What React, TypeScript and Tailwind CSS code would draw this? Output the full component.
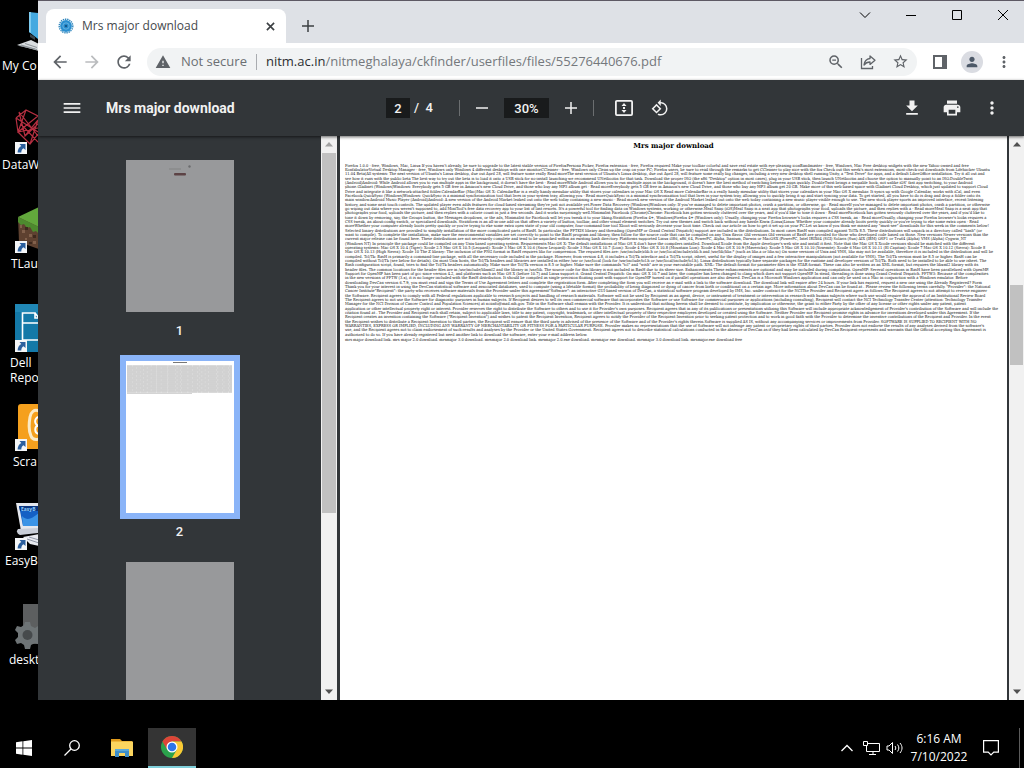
import React from "react";

const UI = "font-['Open_Sans','Noto_Sans',sans-serif]";

function Icon({ d, className }: { d: string; className: string }) {
  return (
    <svg viewBox="0 0 24 24" fill="currentColor" className={className} aria-hidden="true">
      <path d={d} />
    </svg>
  );
}

const BACK = "M20 11H7.83l5.59-5.59L12 4l-8 8 8 8 1.41-1.41L7.83 13H20v-2z";
const FORWARD = "M12 4l-1.41 1.41L16.17 11H4v2h12.17l-5.58 5.59L12 20l8-8z";
const RELOAD =
  "M17.65 6.35A7.958 7.958 0 0012 4c-4.42 0-7.99 3.58-7.99 8s3.57 8 7.99 8c3.73 0 6.84-2.55 7.73-6h-2.08A5.99 5.99 0 0112 18c-3.31 0-6-2.69-6-6s2.69-6 6-6c1.66 0 3.14.69 4.22 1.78L13 11h7V4l-2.35 2.35z";
const WARNING = "M1 21h22L12 2 1 21zm12-3h-2v-2h2v2zm0-4h-2v-4h2v4z";
const ZOOM_OUT =
  "M15.5 14h-.79l-.28-.27A6.471 6.471 0 0016 9.5 6.5 6.5 0 109.5 16c1.61 0 3.09-.59 4.23-1.57l.27.28v.79l5 4.99L20.49 19l-4.99-5zm-6 0C7.01 14 5 11.99 5 9.5S7.01 5 9.5 5 14 7.01 14 9.5 11.99 14 9.5 14zM7 8.8h5v1.5H7z";
const STAR =
  "M22 9.24l-7.19-.62L12 2 9.19 8.63 2 9.24l5.46 4.73L5.82 21 12 17.27 18.18 21l-1.63-7.03L22 9.24zM12 15.4l-3.76 2.27 1-4.28-3.32-2.88 4.38-.38L12 6.1l1.71 4.04 4.38.38-3.32 2.88 1 4.28L12 15.4z";
const PERSON =
  "M12 12c2.21 0 4-1.79 4-4s-1.79-4-4-4-4 1.79-4 4 1.79 4 4 4zm0 2c-2.67 0-8 1.34-8 4v2h16v-2c0-2.66-5.33-4-8-4z";
const DOTS =
  "M12 8c1.1 0 2-.9 2-2s-.9-2-2-2-2 .9-2 2 .9 2 2 2zm0 2c-1.1 0-2 .9-2 2s.9 2 2 2 2-.9 2-2-.9-2-2-2zm0 6c-1.1 0-2 .9-2 2s.9 2 2 2 2-.9 2-2-.9-2-2-2z";
const MENU = "M2 18h20v-2H2v2zm0-5h20v-2H2v2zm0-7v2h20V6H2z";
const MINUS = "M4 11h16v2H4z";
const PLUS = "M20 13h-7v7h-2v-7H4v-2h7V4h2v7h7v2z";
const ROTATE =
  "M7.34 6.41L.86 12.9l6.49 6.48 6.49-6.48-6.5-6.49zM3.69 12.9l3.66-3.66L11 12.9l-3.66 3.66-3.65-3.66zm15.67-6.26A8.95 8.95 0 0013 4V.76L8.76 5 13 9.24V6c1.79 0 3.58.68 4.95 2.05a7.007 7.007 0 010 9.9 6.973 6.973 0 01-7.79 1.44l-1.49 1.49C10.02 21.62 11.51 22 13 22c2.3 0 4.61-.88 6.36-2.64a8.98 8.98 0 000-12.72z";
const DOWNLOAD = "M19 9h-4V3H9v6H5l7 7 7-7zM5 18v2h14v-2H5z";
const PRINT =
  "M19 8H5c-1.66 0-3 1.34-3 3v6h4v4h12v-4h4v-6c0-1.66-1.34-3-3-3zm-3 11H8v-5h8v5zm3-7c-.55 0-1-.45-1-1s.45-1 1-1 1 .45 1 1-.45 1-1 1zm-1-9H6v4h12V3z";

function Shortcut() {
  return (
    <g>
      <rect x="0" y="36" width="12" height="12" fill="#f4f6f8" />
      <path d="M4.500 38h6v6l-2-1.800c-1.600 1-2.200 2.300-2.200 4.400H2.600c0-3.200 1.500-5.400 3.700-6.600z" fill="#2b5f9e" />
    </g>
  );
}

const desktopIcons: { label: string[]; pad: string; art: React.ReactNode }[] = [
  {
    label: ["My Co"],
    pad: "pl-[2px]",
    art: (
      <g>
        <path d="M14 5l9 1v26l-9-7z" fill="#45a9e0" />
        <path d="M14 5l2 0v21l-2-1z" fill="#7ecbf0" />
        <path d="M2 38l14-5 8 4v7z" fill="#d9dde0" />
        <path d="M6 38l14 4M10 36.5l12 4M4 38.5l18 4" stroke="#8d9499" strokeWidth="1" fill="none" />
        <path d="M15 27l5 3v3l-5-3z" fill="#3a4248" />
      </g>
    ),
  },
  {
    label: ["DataW"],
    pad: "pl-[2px]",
    art: (
      <g>
        <path
          d="M1 12l10-8 12 6M1 12l22 14M4 6l6 24 13-16M11 4L3 26l20-4M1 12l2 14 12 12 8-10M3 26l20-16M4 6l19 24M10 30l13-12M6 18l17 18M15 38l8-24M3 26l12 12"
          stroke="#b52f41"
          strokeWidth="1.2"
          fill="none"
        />
        <Shortcut />
      </g>
    ),
  },
  {
    label: ["TLau"],
    pad: "pl-[11px]",
    art: (
      <g>
        <path d="M3 12L24 2v24z" fill="#62a83c" />
        <path d="M3 12l21 10v22L4 37z" fill="#5e4130" />
        <path d="M3 12l21 10v7l-3-3-3 1-3-5-3 1-3-4-3 1-3-3z" fill="#4d8a2e" />
        <path d="M7 25h3v3H7zM14 29h3v3h-3zM18 36h3v3h-3zM10 33h2v2h-2zM5 20h2v3H5z" fill="#81604b" />
        <path d="M10 22h3v3h-3zM18 30h3v3h-3zM14 37h3v2h-3z" fill="#3e291e" />
        <Shortcut />
      </g>
    ),
  },
  {
    label: ["Dell", "Repo"],
    pad: "pl-[10px]",
    art: (
      <g>
        <rect width="48" height="48" fill="#1479a8" />
        <path d="M0 0h24v8H0z" fill="#2087b5" />
        <path d="M7.500 36V9H20v5h4M7.500 19H24M20 9l4 5M7.500 36H24" stroke="#fff" strokeWidth="1.600" fill="none" />
        <Shortcut />
      </g>
    ),
  },
  {
    label: ["Scra"],
    pad: "pl-[13px]",
    art: (
      <g>
        <rect x="3" y="1" width="42" height="45" rx="3" fill="#f5a01d" />
        <path
          d="M24 8c-5-2-8 1-9 6-1 6-1 15 1 19 1 3 4 4 8 3"
          stroke="#fbeac5"
          strokeWidth="3"
          fill="none"
        />
        <path d="M24 14c-3 0-5 4-3 7 1 2 3 2 3 2M24 22c-5 1-5 8 0 9" stroke="#fff" strokeWidth="2" fill="none" />
        <Shortcut />
      </g>
    ),
  },
  {
    label: ["EasyB"],
    pad: "pl-[5px]",
    art: (
      <g>
        <path d="M1 1h23v28H6z" fill="#e5e8ee" />
        <path d="M4 4h20v20H8z" fill="#1460c4" />
        <path d="M7 14c6 6 10 2 17-3v13H8z" fill="#3b94e6" />
        <path d="M4 4h20v5H5z" fill="#0a357f" />
        <text x="6" y="8.500" fontSize="5" fontWeight="700" fill="#8fd0ff">
          EasyB
        </text>
        <path d="M3 27l21-1v5l-19 2c-3-1-4-4-2-6z" fill="#c9ced8" />
        <path d="M8 35l16-3v12l-9-2z" fill="#e8eaf0" />
        <path d="M12 37l12 4M14 35l10 3" stroke="#9097a6" fill="none" />
        <Shortcut />
      </g>
    ),
  },
  {
    label: ["deskt"],
    pad: "pl-[9px]",
    art: (
      <g>
        <rect x="8" y="3" width="30" height="40" fill="#5d5f60" />
        <g fill="#6e7476">
          <path d="M10 21h5l1 4 4 2 3-2 3 4-3 3v4l3 3-3 4-3-1-4 2-1 4h-5l-1-4-3-2-4 1-2-4 3-3v-4l-3-3 2-4 4 1 3-2z" />
        </g>
        <circle cx="12.500" cy="34" r="5" fill="#464a4c" />
      </g>
    ),
  },
];

function Desktop() {
  return (
    <ul className="flex w-[38px] shrink-0 flex-col overflow-hidden pt-[7px]">
      {desktopIcons.map((icon) => (
        <li key={icon.label[0]} className="h-[99px] shrink-0">
          <svg viewBox="0 0 48 48" className="ml-[15px] h-12 w-12" aria-hidden="true">
            {icon.art}
          </svg>
          <div className={`pt-[3px] text-xs leading-[15px] whitespace-nowrap text-white ${icon.pad}`}>
            {icon.label.map((line) => (
              <div key={line}>{line}</div>
            ))}
          </div>
        </li>
      ))}
    </ul>
  );
}

function TabStrip() {
  return (
    <div className="flex h-[43px] shrink-0 border-t border-[#5d5964] bg-[#dee1e6] pl-2">
      <div className="mt-2 flex w-60 items-center rounded-t-lg bg-white pl-3 pr-2">
        <svg viewBox="0 0 16 16" className="h-4 w-4 shrink-0" aria-hidden="true">
          <circle cx="8" cy="8" r="6.800" fill="none" stroke="#2f86bd" strokeWidth="1.400" strokeDasharray="1.400 .8" />
          <circle cx="8" cy="8" r="5.900" fill="#2a8fd0" />
          <circle cx="8" cy="8" r="3.200" fill="none" stroke="#8cc6ea" strokeWidth=".6" />
          <circle cx="8" cy="8" r="1.300" fill="#14588c" />
        </svg>
        <span className="ml-2 flex-1 text-xs leading-4 whitespace-nowrap text-[#45494d]">Mrs major download</span>
        <button aria-label="Close tab" className="flex h-4 w-4 items-center justify-center text-[#3c4043]">
          <svg viewBox="0 0 10 10" className="h-[9px] w-[9px]" aria-hidden="true">
            <path d="M1 1l8 8M9 1l-8 8" stroke="currentColor" strokeWidth="1.800" />
          </svg>
        </button>
      </div>
      <button aria-label="New tab" className="mt-2 flex w-11 items-center justify-center text-[#3c4043]">
        <Icon d={PLUS} className="h-[18px] w-[18px]" />
      </button>
      <div className="-mr-0.5 ml-auto flex h-7 text-black">
        <button aria-label="Search tabs" className="flex w-[46px] items-center justify-center">
          <svg viewBox="0 0 12 12" className="h-3 w-3" aria-hidden="true">
            <path d="M1 3.500l5 5 5-5" fill="none" stroke="currentColor" />
          </svg>
        </button>
        <button aria-label="Minimize" className="flex w-[46px] items-center justify-center">
          <svg viewBox="0 0 10 10" className="h-2.5 w-2.5" aria-hidden="true">
            <path d="M0 5.500h10" stroke="currentColor" />
          </svg>
        </button>
        <button aria-label="Maximize" className="flex w-[46px] items-center justify-center">
          <svg viewBox="0 0 10 10" className="h-2.5 w-2.5" aria-hidden="true">
            <path d="M.5.5h9v9h-9z" fill="none" stroke="currentColor" />
          </svg>
        </button>
        <button aria-label="Close" className="flex w-[46px] items-center justify-center">
          <svg viewBox="0 0 10 10" className="h-2.5 w-2.5" aria-hidden="true">
            <path d="M0 0l10 10M10 0L0 10" stroke="currentColor" />
          </svg>
        </button>
      </div>
    </div>
  );
}

function AddressBar() {
  const btn = "flex h-8 w-8 shrink-0 items-center justify-center";
  return (
    <div className="flex h-[37px] shrink-0 items-center bg-white pl-1.5 pr-1 text-[#5f6368]">
      <button aria-label="Back" className={btn}>
        <Icon d={BACK} className="h-5 w-5" />
      </button>
      <button aria-label="Forward" className={`${btn} text-[#babcbe]`}>
        <Icon d={FORWARD} className="h-5 w-5" />
      </button>
      <button aria-label="Reload" className={btn}>
        <Icon d={RELOAD} className="h-5 w-5" />
      </button>
      <div className="mx-[7px] flex h-7 min-w-0 flex-1 items-center rounded-full bg-[#f1f3f4] pl-2 pr-px">
        <Icon d={WARNING} className="h-4 w-4 shrink-0" />
        <span className="ml-2.5 text-[13px] whitespace-nowrap text-[#6b6f73]">Not secure</span>
        <span className="mx-[9px] h-4 w-px bg-[#a9acb0]" />
        <a href="#page-2" className="flex-1 truncate text-[13px] text-[#74787c]">
          <span className="text-[#2b2e31]">nitm.ac.in</span>/nitmeghalaya/ckfinder/userfiles/files/55276440676.pdf
        </a>
        <button aria-label="Zoom" className={btn}>
          <Icon d={ZOOM_OUT} className="h-[18px] w-[18px]" />
        </button>
        <button aria-label="Share" className={btn}>
          <svg viewBox="0 0 16 16" className="h-4 w-4" fill="none" stroke="currentColor" strokeWidth="1.300" aria-hidden="true">
            <path d="M1.500 4v10.500h11V12" />
            <path d="M10 2l5 4.200-5 4.200V8C7.500 8 5.500 9 4 11c.4-3.600 2.400-6 6-6.500z" strokeLinejoin="round" />
          </svg>
        </button>
        <button aria-label="Bookmark" className={btn}>
          <Icon d={STAR} className="h-[17px] w-[17px]" />
        </button>
      </div>
      <button aria-label="Side panel" className={btn}>
        <svg viewBox="0 0 14 14" className="h-3.5 w-3.5" aria-hidden="true">
          <path d="M1 1h12v12H1z" fill="#fff" stroke="currentColor" strokeWidth="2" />
          <path d="M9 1h4v12H9z" fill="currentColor" />
        </svg>
      </button>
      <button aria-label="Profile" className={btn}>
        <span className="flex h-[22px] w-[22px] items-center justify-center rounded-full bg-[#dadce2]">
          <Icon d={PERSON} className="h-4 w-4 text-[#4d5968]" />
        </span>
      </button>
      <button aria-label="Customize" className={btn}>
        <Icon d={DOTS} className="h-[18px] w-[18px]" />
      </button>
    </div>
  );
}

function PdfToolbar() {
  const btn = "flex h-8 w-8 shrink-0 items-center justify-center";
  return (
    <div className="z-10 flex h-14 shrink-0 items-center bg-[#323639] font-[Roboto,sans-serif] text-[#f1f1f1] shadow-[0_1px_3px_rgba(0,0,0,0.6)]">
      <div className="flex flex-1 items-center pl-[18px]">
        <button aria-label="Menu" className={btn}>
          <Icon d={MENU} className="h-5 w-5" />
        </button>
        <h1 className="ml-[18px] text-sm font-bold whitespace-nowrap">Mrs major download</h1>
      </div>
      <div className="flex items-center pr-0.5 text-[13px] font-medium">
        <input aria-label="Page" defaultValue="2" className="h-5 w-6 bg-[#191b1c] text-center" />
        <span className="w-[49px] pl-1 whitespace-pre">/  4</span>
        <span className="mr-1.5 h-4 w-px bg-[#6b6e70]" />
        <button aria-label="Zoom out" className={btn}>
          <Icon d={MINUS} className="h-[18px] w-[18px]" />
        </button>
        <input aria-label="Zoom level" defaultValue="30%" className="mx-1.5 h-5 w-[45px] bg-[#191b1c] text-center" />
        <button aria-label="Zoom in" className={btn}>
          <Icon d={PLUS} className="h-[18px] w-[18px]" />
        </button>
        <span className="mr-3.5 ml-1.5 h-4 w-px bg-[#6b6e70]" />
        <button aria-label="Fit to page" className={btn}>
          <svg viewBox="0 0 20 20" className="h-5 w-5" aria-hidden="true">
            <rect x="1.900" y="2.900" width="16.200" height="14.200" rx="1" fill="none" stroke="currentColor" strokeWidth="1.800" />
            <path d="M10 5l2.500 3h-5zM10 15l2.500-3h-5z" fill="currentColor" />
            <path d="M9 9h2v2H9z" fill="currentColor" />
          </svg>
        </button>
        <button aria-label="Rotate" className={`${btn} ml-1`}>
          <Icon d={ROTATE} className="h-[18px] w-[18px]" />
        </button>
      </div>
      <div className="flex flex-1 justify-end gap-2 pr-4">
        <button aria-label="Download" className={btn}>
          <Icon d={DOWNLOAD} className="h-5 w-5" />
        </button>
        <button aria-label="Print" className={btn}>
          <Icon d={PRINT} className="h-5 w-5" />
        </button>
        <button aria-label="More actions" className={btn}>
          <Icon d={DOTS} className="h-5 w-5" />
        </button>
      </div>
    </div>
  );
}

function Arrow({ up, dim }: { up?: boolean; dim?: boolean }) {
  return (
    <svg viewBox="0 0 16 16" className={`h-[17px] w-4 shrink-0 ${dim ? "text-[#a3a3a3]" : "text-[#505050]"}`} aria-hidden="true">
      <path d={up ? "M4 10l4-4.500 4 4.500z" : "M4 6l4 4.500L12 6z"} fill="currentColor" />
    </svg>
  );
}

function Scrollbar({ thumb, width, dim }: { thumb: string; width: string; dim?: boolean }) {
  return (
    <div className={`flex shrink-0 flex-col items-center bg-[#f1f1f1] ${width}`}>
      <Arrow up dim={dim} />
      <div className="flex min-h-0 w-full flex-1 flex-col px-px">
        <div className={`bg-[#c1c1c1] ${thumb}`} />
      </div>
      <Arrow />
    </div>
  );
}

function Thumb({ n, selected, children }: { n: number; selected?: boolean; children?: React.ReactNode }) {
  return (
    <div className="flex shrink-0 flex-col items-center gap-[5px] pb-4">
      <button aria-label={`Page ${n}`} className={`border-6 ${selected ? "border-[#8ab4f8] bg-white" : "border-transparent"}`}>
        <svg viewBox="0 0 108 152" className="h-38 w-27" aria-hidden="true">
          <rect width="108" height="152" fill={selected ? "#fff" : "#98999b"} />
          {children}
        </svg>
      </button>
      <span className="font-[Roboto,sans-serif] text-[13px] leading-4 font-medium text-[#f1f1f1]">{n}</span>
    </div>
  );
}

function Sidebar() {
  return (
    <nav aria-label="Pages" className="flex w-[283px] shrink-0 flex-col items-center overflow-hidden bg-[#323639] pt-[18px]">
      <Thumb n={1}>
        <path d="M43 9h12" stroke="#8d8e8f" strokeWidth="2" />
        <circle cx="63.500" cy="6.500" r="1.200" fill="#6b6c6e" />
        <rect x="48" y="13" width="12" height="2.500" rx="1" fill="#5c4345" />
      </Thumb>
      <Thumb n={2} selected>
        <path d="M47 1.500h14" stroke="#777" strokeWidth="1" />
        <rect x="1" y="4.500" width="105" height="27" fill="#e2e2e2" />
        {Array.from({ length: 14 }, (_, i) => (
          <path
            key={i}
            d={`M1 ${5 + i * 2}h105`}
            stroke="#bdbdbd"
            strokeWidth=".9"
            strokeDasharray={i % 2 ? "9 .5 4 .4 6 .5" : "5 .4 11 .5 7 .4"}
          />
        ))}
        <path d="M1 32.500h65" stroke="#d4d4d4" />
      </Thumb>
      <Thumb n={3} />
    </nav>
  );
}

const paragraphs: string[][] = [
  [
    "Firefox 1.0.0 - free, Windows, Mac, Linux If you haven't already, be sure to upgrade to the latest stable version of FirefoxPersona Picker, Firefox extension - free, Firefox required Make your toolbar colorful and save real estate with eye-pleasing iconBandmaster - free, Windows, Mac Free desktop widgets with the new Yahoo-owned and free",
    "KonfabulatorVirtual Desktop Manager - free, Windows only Windows 4 different desktops with one monitorCCleaner - free, Windows only Clean up the crap on your PC; Firefox users, be sure to read through the remarks to get CCleaner to play nice with the fox Check out this week's most extensions, most-check-out downloads from Lifehacker Ubuntu",
    "11.04 Beta(All systems: The next version of Ubuntu's Linux desktop, due out April 28, will feature some really Read moreThe next version of Ubuntu's Linux desktop, due out April 28, will feature some really big changes, including a very new desktop shell running Unity, a \"Test Drive\" for apps, and a default LibreOffice installation. Try it all out and",
  ],
  [
    "see how it runs with the public beta The best way to try out the beta is to load it onto a USB stick for no-install launching we recommend UNetbootin for that task. Download the proper ISO (the x86 \"Desktop\" option in most cases), plug in your USB stick, then launch UNetbootin and choose the option to manually point to an ISO.DoubleTwist",
    "(Android)Android: While Android allows you to run multiple apps in the background, it doesn't have the best - Read moreWhile Android allows you to run multiple apps in the background, it doesn't have the best method of switching between apps quickly. DoubleTwist brings a swipable hook, not unlike iOS' fast app switching, to your Android",
    "phone.Gladinet (Windows)Windows: Everybody gets 5 GB free in Amazon's new Cloud Drive, and those who buy any MP3 album get - Read moreEverybody gets 5 GB free in Amazon's new Cloud Drive, and those who buy any MP3 album get 20 GB. Make more of this web-based space with Gladinet Cloud Desktop, which just updated to support Cloud",
  ],
  [
    "Drive and integrate it like a network-attached folder.CalendarBar (Mac)Mac OS X: CalendarBar is a really handy menubar utility that stores your calendars in your Mac OS X Read more CalendarBar is a really handy menubar utility that stores your calendars in your Mac OS X menubar. It syncs up with Google Calendar, works with iCal, and even",
    "Facebook.QuickSync (Windows)Windows: QuickSync is a minimal synchronization tool that lives in your system tray, allowing you - Read moreQuickSync is a minimal synchronization tool that lives in your system tray, allowing you to quickly bring it up and start syncing your data. To get started, all you have to do is drag and drop a folder onto its",
    "main window.Android Music Player (Android)Android: A new version of the Android Market leaked out onto the web today containing a new music - Read moreA new version of the Android Market leaked out onto the web today containing a new music player visible enough to use. The new stock player sports an improved interface, recent listening",
  ],
  [
    "history, and some neat touch controls. The updated player even adds features for cloud-based streaming they're just not available yet.Power Data Recovery (Windows)Windows only: If you've managed to delete important photos, crash a partition, or otherwise, go - Read moreIf you've managed to delete important photos, crash a partition, or otherwise",
    "go wiping out data where you weren't supposed to, add MiniTool's free data recovery app to your list of last resorts. It's a powerful tool for finding data on Windows systems, working or otherwise.Meal Snap (iOS)Meal Snap is a neat app that photographs your food, uploads the picture, and then replies with a - Read moreMeal Snap is a neat app that",
    "photographs your food, uploads the picture, and then replies with a calorie count in just a few seconds. And it works surprisingly well.Minimalist Facebook (Chrome)Chrome: Facebook has gotten seriously cluttered over the years, and if you'd like to tone it down - Read moreFacebook has gotten seriously cluttered over the years, and if you'd like to",
  ],
  [
    "tone it down by removing, say, the Groups button, the Messages dropdown, or the ads, Minimalist for Facebook will let you tweak it to your liking.Stratiform (Firefox 4+, Windows)Firefox 4+ (Windows only): Usually, changing your Firefox browser's looks requires a CSS tweak, an - Read moreUsually, changing your Firefox browser's looks requires a",
    "CSS tweak, an about:config switch, or specialized downloads. Stratiform is an all-in-one add-on that offers a variety of button, toolbar, and other visual element switches. Try out new themes and switch back without any hassle.Kiwix (Linux)Linux: Whether your computer already boots pretty quickly or you're trying to eke some extra open - Read",
    "moreWhether your computer already boots pretty quickly or you're trying to eke some extra open state of your old computer, four-command-line tool Xboot will seriously decrease your boot time. Check out our article on how to get it set up on your PC.Let us know if you think we missed any \"must-see\" downloads for this week in the comments below!",
  ],
  [
    "Selected binary distributions are provided to simplify installation of the more complicated parts of BasH. In particular, the PFTKIS library and threading (OpenMP or Grand Central Dispatch) support are included in the distributions. In most cases BasH was compiled against TclTk 8.5. These distributions will unpack in a directory called \"bash\" (or",
    "want to compile). To complete the installation, make sure the environmental variables are set correctly to point to the BasH program and library, then follow for the source code that can be compiled on any Unix flavor. Old versions Old versions of BasH are provided for those who developed code based on those. New versions Newer versions than the",
    "current major release can be found here. These distributions are not necessarily complete and tend to be unpacked within an existing bash directory. Platforms supported Linux i386, x86_64, PowerPC, Alpha, Itanium, Darwin or MacOSX (PowerPC, Intel IRIX64 (SGI) Solaris (Sun) AIX (IBM) OSF1 or Tru64 (Alpha) VMS (Alpha) Cygwin_NT",
  ],
  [
    "(Windows NT) In principle the package could be compiled on any Unix-based operating system. Requirements Mac OS X: The default installations of Mac OS X don't have the compilers installed. Download Xcode from the Apple developer's web site and install it first. Note that the Mac OS X Xcode versions should be matched with the different",
    "operating systems: Mac OS X 10.4 (Tiger): Xcode 2.5 Mac OS X 10.5 (Leopard): Xcode 3 Mac OS X 10.6 (Snow Leopard): Xcode 3 Mac OS X 10.7 (Lion): Xcode 4 Mac OS X 10.8 (Mountain Lion): Xcode 4 Mac OS X 10.9 (Mavericks): Xcode 5 Mac OS X 10.10 (Yosemite): Xcode 6 Mac OS X 10.11 (El Capitan): Xcode 7 Mac OS X 10.12 (Sierra): Xcode 8",
    "Mac OS X 10.13 (High Sierra): Xcode 10 The Z library: The inclusion of the PNG format in BasH requires libz for compression. The required files are: /usr/include/zlib.h or /usr/local/include/zlib.h and /usr/lib/libz.* (such as libz.a or libz.so) On some versions of Unix and VMS, libz may not be available, therefore it is included in the distribution and will be",
  ],
  [
    "compiled. Tcl/Tk: BasH is primarily a command-line package, with all the necessary code included in the package. However, from version 4.8, it includes a Tcl/Tk interface and a Tcl/Tk script, isheet, useful for the display of images and a few interactive manipulations (not available for VMS). The Tcl/Tk version must be 8.5 or higher. BasH can be",
    "compiled without Tcl/Tk (see below for details). On most Unix hosts, the Tcl/Tk headers and libraries are installed in either /usr or /usr/local (look for /usr/include/tcl.h or /usr/local/include/tcl.h). Linux distributions typically have separate packages for the runtime and developer versions of Tcl/Tk. Both need to be installed to be able to use isheet. The",
    "Bash configuration script, found, tries to find the Tcl/Tk headers automatically. Make sure the Tcl/Tk version is 8.5 or higher. Make sure the commands \"tcl\" and \"wish\" are in your executable path. XML: The default format for parameter files is the STAR format. These can also be written as an XML format, but requires the libxml2 library with its",
  ],
  [
    "header files. The common locations for the header files are in /usr/include/libxml2 and the library in /usr/lib. The source code for this library is not included in BasH due to its sheer size. Enhancements These enhancements are optional and may be included during compilation. OpenMP: Several operations in BasH have been parallelized with OpenMP.",
    "Support for OpenMP has been part of gcc since version 4.2, and platforms such as Mac OS X (before 10.7) and Linux support it. Grand Central Dispatch: On mac OS X 10.7 and later, the compiler has been changed to clang which does not support OpenMP. In stead, threading is done using Grand Central Dispatch. FFTW3: Because of the complexities",
    "in the new versions of FFTW (3.x), it is no longer included with the BasH distribution. It should be compiled as single-precision floating point with support for OpenMP turned on if parallel operations are also desired. DevCan is a Microsoft Windows application and can only be used on a Mac in conjunction with a Windows emulator. Before",
  ],
  [
    "downloading DevCan version 6.7.9, you must read and sign the Terms of Use Agreement letters and complete the registration form. After completing the form you will receive an e-mail with a link to the software download. The download link will expire after 24 hours. If your link has expired, request a new one using the Already Registered? Form",
    "Thank you for your interest in using the DevCan statistical software and associated databases, used to compute (using a lifetable format) the probability of being diagnosed or dying of cancer from birth or conditional on a certain age. More information about DevCan can be found at . Please review the following terms carefully. \"Provider\": the National",
    "Cancer Institute\"Recipient\": the party who receives software materials from the Provider under this agreement\"Software\": an interactive GUI-based version of DevCan, a statistical software program developed by IMS, Inc. under contract for the NCIThe Provider and Recipient agree as follows:The Recipient agrees to not attempt to reverse engineer",
  ],
  [
    "the Software. Recipient agrees to comply with all Federal regulations applicable to research projects and handling of research materials. Software will not be used by Recipient as an agent, device, or instrument of treatment or intervention in research with human subjects where such use would require the approval of an Institutional Review Board",
    "The Recipient agrees to not use the Software for diagnostic purposes in human subjects. If Recipient desires to sell its own commercial software that incorporates the Software or use Software for commercial purposes or applications (including consulting), Recipient will contact the NCI Technology Transfer Center (attention: Technology Transfer",
    "Manager for the NCI Division of Cancer Control and Population Sciences) at nciinfo@mail.nih.gov. Title in the Software shall remain with the Provider. It is understood that nothing herein shall be deemed to constitute, by implication or otherwise, the grant to either Party by the other of any license or other rights under any patent, patent",
  ],
  [
    "application or other intellectual property right or interest. Provider reserves the right to distribute the Software to others and to use it for Provider's own purposes. Recipient agrees that in any of its publications or presentations utilizing this Software will include appropriate acknowledgement of Provider's contribution of the Software and will include the",
    "citation found at . The Provider and Recipient each shall retain, subject to applicable laws, title to any patent, copyright, trademark, or other intellectual property of their respective employees developed or created using the Software. Neither Provider nor Recipient promise rights in advance for inventions developed under this Agreement. If the",
    "Recipient creates an invention containing the Software (\"Recipient Invention\") and wishes to patent the Recipient Invention, Recipient agrees to notify the Provider of the Recipient Invention prior to seeking patent protection and to work in good faith with the Provider to determine the inventive contributions of the Recipient and Provider. In the event",
  ],
  [
    "the Recipient wishes to distribute a Recipient Invention to third parties, the Recipient will ensure that the third party is advised of the presence of the Software and of the Provider's rights therein.Software is supplied AS IS, without any accompanying services or improvements from Provider. SOFTWARE IS SUPPLIED TO RECIPIENT WITH NO",
    "WARRANTIES, EXPRESS OR IMPLIED, INCLUDING ANY WARRANTY OF MERCHANTABILITY OR FITNESS FOR A PARTICULAR PURPOSE. Provider makes no representations that the use of Software will not infringe any patent or proprietary rights of third parties. Provider does not endorse the results of any analyses derived from the software's",
    "use, and the Recipient agrees not to claim endorsement of such results and analyses by the Provider or the United States Government. Recipient agrees not to describe statistical calculations conducted in the absence of DevCan as if they had been calculated by DevCan Recipient represents and warrants that the Official accepting this Agreement is",
  ],
  [
    "authorized to do so. If you have already registered but need another link to download the software, enter your e-mail address below.",
  ],
  [
    "mrs major download link. mrs major 2.0 download. mrsmajor 3.0 download. mrsmajor 2.0 download link. mrsmajor 2.0.exe download. mrsmajor exe download. mrsmajor 3.0 download link. mrsmajor.exe download free",
  ],
];

function Document() {
  return (
    <main className="flex min-w-0 flex-1 bg-[#323639] pr-0.5 pl-[3px]">
      <article id="page-2" className="min-w-0 flex-1 overflow-hidden bg-white px-[5px] pt-[5px] text-black">
        <h2 className="text-center font-['DejaVu_Serif',serif] text-[7px] leading-[10px] font-bold">Mrs major download</h2>
        <div className="mt-[13px] grid gap-px font-['DejaVu_Serif_Condensed','Liberation_Serif',serif] text-[4px] leading-[4px] text-[#111]">
          {paragraphs.map((lines) => (
            <p key={lines[0]}>
              {lines.map((line) => (
                <span key={line} className="block whitespace-nowrap">
                  {line}
                </span>
              ))}
            </p>
          ))}
        </div>
      </article>
    </main>
  );
}

function Taskbar() {
  const btn = "flex w-12 items-center justify-center";
  return (
    <footer className="flex h-10 shrink-0 bg-black text-white">
      <button aria-label="Start" className={btn}>
        <svg viewBox="0 0 16 16" className="h-4 w-4" fill="currentColor" aria-hidden="true">
          <path d="M0 2.200l6.500-.9v6.300H0zM7.300 1.200L16 0v7.600H7.300zM0 8.400h6.500v6.300L0 13.800zM7.300 8.400H16V16l-8.700-1.200z" />
        </svg>
      </button>
      <button aria-label="Search" className={btn}>
        <svg viewBox="0 0 16 16" className="h-4 w-4" fill="none" stroke="currentColor" strokeWidth="1.300" aria-hidden="true">
          <circle cx="10.500" cy="5.500" r="4.800" />
          <path d="M7 9L.5 15.500" />
        </svg>
      </button>
      <button aria-label="File Explorer" className={`${btn} ml-0.5`}>
        <svg viewBox="0 0 22 18" className="h-[18px] w-[22px]" aria-hidden="true">
          <path d="M0 0h9l2 2h10v3H0z" fill="#e09b1c" />
          <path d="M0 2.500h22V17H0z" fill="#fbd55f" />
          <path d="M4 10h14v8h-4v-4H8v4H4z" fill="#3f8fc9" />
          <path d="M4 10h14v2H4z" fill="#5aa9da" />
        </svg>
      </button>
      <button aria-label="Google Chrome" className={`${btn} ml-0.5 border-b-2 border-[#7fcfda] bg-[#343434]`}>
        <svg viewBox="0 0 48 48" className="h-[22px] w-[22px]" aria-hidden="true">
          <circle cx="24" cy="24" r="24" fill="#2ba24c" />
          <path d="M3.200 12L13.600 30 24 12h20.800A24 24 0 003.200 12z" fill="#dd4538" />
          <path d="M44.800 12H24l10.400 18L24 48A24 24 0 0044.800 12z" fill="#fcc934" />
          <circle cx="24" cy="24" r="12" fill="#fff" />
          <circle cx="24" cy="24" r="9.300" fill="#2f75e8" />
        </svg>
      </button>
      <div className="ml-auto flex items-center">
        <button aria-label="Show hidden icons" className="flex w-6 justify-center">
          <svg viewBox="0 0 12 12" className="h-3 w-3" aria-hidden="true">
            <path d="M.5 9L6 3.500 11.500 9" fill="none" stroke="currentColor" strokeWidth="1.300" />
          </svg>
        </button>
        <button aria-label="Network" className="flex w-6 justify-center">
          <svg viewBox="0 0 17 14" className="h-3.5 w-[17px]" fill="none" stroke="currentColor" aria-hidden="true">
            <path d="M5 2.500h11.500v8H3.500V5M10 10.500v3M6 13.500h7M.5.500h4v4h-4z" />
          </svg>
        </button>
        <button aria-label="Volume" className="flex w-6 justify-center">
          <svg viewBox="0 0 18 14" className="h-3.5 w-[18px]" fill="none" stroke="currentColor" aria-hidden="true">
            <path d="M1 5h2l3.500-3.500v11L3 9H1zM9 5c1 1.300 1 2.700 0 4M11.500 3.500c1.800 2.300 1.800 4.700 0 7M14 2c2.700 3.300 2.700 6.700 0 10" />
          </svg>
        </button>
        <time className="w-16 text-center text-xs leading-[18px] whitespace-nowrap">
          <span className="block">6:16 AM</span>
          <span className="block">7/10/2022</span>
        </time>
        <button aria-label="Notifications" className="flex w-10 justify-center">
          <svg viewBox="0 0 16 16" className="h-4 w-4" fill="none" stroke="currentColor" strokeWidth="1.200" aria-hidden="true">
            <path d="M.6.600h14.800v11.500h-4.600L8 15l-2.800-2.900H.6z" />
          </svg>
        </button>
        <span className="mr-1 ml-2 h-10 w-px bg-[#5c5c5c]" />
      </div>
    </footer>
  );
}

export default function App() {
  return (
    <div className={`flex h-screen flex-col overflow-hidden bg-black ${UI}`}>
      <div className="flex min-h-0 flex-1 pb-7">
        <Desktop />
        <section className="flex min-w-0 flex-1 flex-col overflow-hidden">
          <TabStrip />
          <AddressBar />
          <PdfToolbar />
          <div className="flex min-h-0 flex-1">
            <Sidebar />
            <Scrollbar width="w-4" thumb="h-[68%]" dim />
            <Document />
            <Scrollbar width="w-[15px]" thumb="mt-[132px] h-[15%]" />
          </div>
        </section>
      </div>
      <Taskbar />
    </div>
  );
}
